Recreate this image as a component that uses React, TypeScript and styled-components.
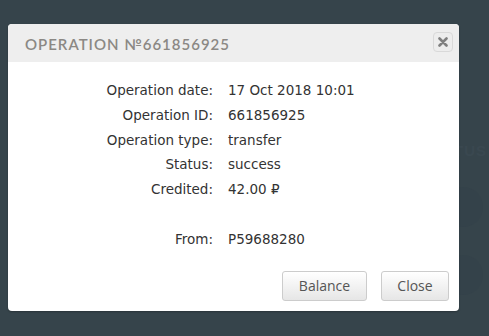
import React from 'react';
import styled, { createGlobalStyle } from 'styled-components';

const GlobalStyle = createGlobalStyle`
  html, body {
    margin: 0;
    padding: 0;
    background: #36444b;
  }
  * {
    box-sizing: border-box;
  }
`;

const Page = styled.div`
  position: relative;
  width: 489px;
  height: 336px;
  overflow: hidden;
  background: #36444b;
`;

// faint page content under the overlay
const Backdrop = styled.div`
  position: absolute;
  right: 0;
  top: 142px;
  display: flex;
  flex-direction: column;
  align-items: flex-end;
  gap: 28px;
`;

const BackdropLabel = styled.div`
  font-family: 'Liberation Sans', Arial, sans-serif;
  font-weight: bold;
  font-size: 15px;
  letter-spacing: 1px;
  color: #3a4850;
  padding-right: 2px;
`;

const BackdropCircle = styled.div`
  width: 40px;
  height: 40px;
  border-radius: 50%;
  background: #34424a;
  margin-right: 6px;
`;

const Dialog = styled.div`
  position: absolute;
  left: 8px;
  top: 24px;
  width: 451px;
  background: #fff;
  border-radius: 4px;
  overflow: hidden;
  box-shadow: 0 1px 2px rgba(0, 0, 0, 0.25);
`;

const Header = styled.div`
  height: 38px;
  background: #eeeeee;
  display: flex;
  align-items: center;
  justify-content: space-between;
  padding: 0 6px 0 17px;
`;

const Title = styled.div`
  font-family: Lato, 'Noto Sans', sans-serif;
  font-size: 15px;
  font-weight: 600;
  letter-spacing: 1px;
  color: #8b8884;
  padding-top: 1px;
`;

const CloseIcon = styled.button`
  width: 20px;
  height: 20px;
  padding: 0;
  border: 1px solid #d9d9d9;
  border-radius: 4px;
  background: #ededed;
  display: flex;
  align-items: center;
  justify-content: center;
  margin-top: -2px;
`;

const Body = styled.div`
  padding: 16px 0 0;
  display: grid;
  grid-template-columns: 205px 1fr;
  column-gap: 15px;
  font-family: 'DejaVu Sans', Verdana, sans-serif;
  font-size: 13.5px;
  color: #333;
  line-height: 24.8px;
`;

const Label = styled.div`
  text-align: right;
`;

const Value = styled.div``;

const Footer = styled.div`
  display: flex;
  justify-content: flex-end;
  gap: 14px;
  padding: 19px 10px 10px;
`;

const Button = styled.button<{ $w: number }>`
  width: ${(p) => p.$w}px;
  height: 30px;
  border: 1px solid #cccccc;
  border-radius: 3px;
  background: linear-gradient(#ffffff, #e6e6e6);
  font-family: 'Open Sans', 'Noto Sans', sans-serif;
  font-size: 14px;
  color: #555;
  padding: 0;
`;

const rows: [string, string][] = [
  ['Operation date:', '17 Oct 2018 10:01'],
  ['Operation ID:', '661856925'],
  ['Operation type:', 'transfer'],
  ['Status:', 'success'],
  ['Credited:', '42.00 ₽'],
  ['', '\u00a0'],
  ['From:', 'P59688280'],
];

export default function App() {
  return (
    <Page>
      <GlobalStyle />
      <Backdrop>
        <BackdropLabel>STATUS</BackdropLabel>
        <BackdropCircle />
        <BackdropCircle />
      </Backdrop>
      <Dialog>
        <Header>
          <Title>OPERATION №661856925</Title>
          <CloseIcon aria-label="close">
            <svg width="10" height="10" viewBox="0 0 10 10">
              <path
                d="M1.5 1.5 L8.5 8.5 M8.5 1.5 L1.5 8.5"
                stroke="#808080"
                strokeWidth="2.6"
                strokeLinecap="round"
              />
            </svg>
          </CloseIcon>
        </Header>
        <Body>
          {rows.map(([k, v], i) => (
            <React.Fragment key={i}>
              <Label>{k}</Label>
              <Value>{v}</Value>
            </React.Fragment>
          ))}
        </Body>
        <Footer>
          <Button $w={85}>Balance</Button>
          <Button $w={68}>Close</Button>
        </Footer>
      </Dialog>
    </Page>
  );
}
